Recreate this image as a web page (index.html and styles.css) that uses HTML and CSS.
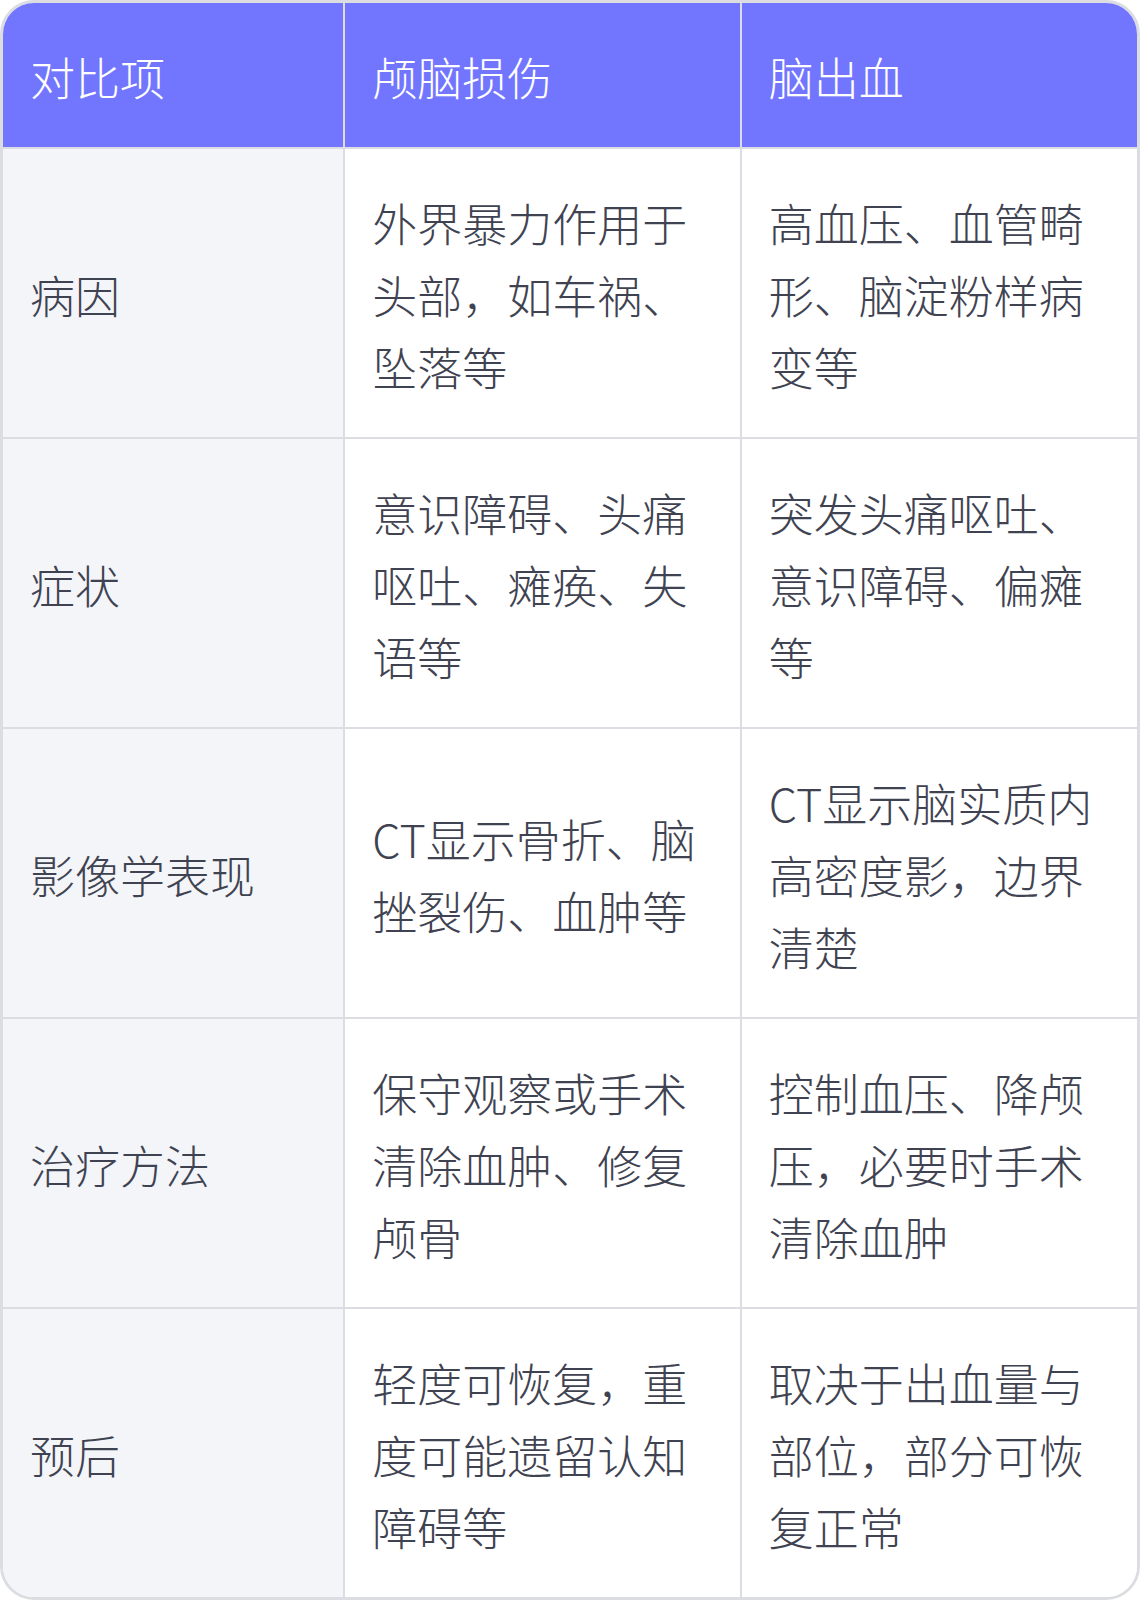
FILE: index.html
```html
<!DOCTYPE html>
<html lang="zh-CN">
<head>
<meta charset="utf-8">
<title>颅脑损伤与脑出血对比</title>
<link rel="stylesheet" href="styles.css">
</head>
<body>
<div class="table-wrap">
  <table class="compare">
    <colgroup>
      <col class="col-label">
      <col class="col-data">
      <col class="col-data">
    </colgroup>
    <thead>
      <tr>
        <th>对比项</th>
        <th>颅脑损伤</th>
        <th>脑出血</th>
      </tr>
    </thead>
    <tbody>
      <tr>
        <td class="label">病因</td>
        <td>外界暴力作用于头部，如车祸、坠落等</td>
        <td>高血压、血管畸形、脑淀粉样病变等</td>
      </tr>
      <tr>
        <td class="label">症状</td>
        <td>意识障碍、头痛呕吐、瘫痪、失语等</td>
        <td>突发头痛呕吐、意识障碍、偏瘫等</td>
      </tr>
      <tr>
        <td class="label">影像学表现</td>
        <td>CT显示骨折、脑挫裂伤、血肿等</td>
        <td>CT显示脑实质内高密度影，边界清楚</td>
      </tr>
      <tr>
        <td class="label">治疗方法</td>
        <td>保守观察或手术清除血肿、修复颅骨</td>
        <td>控制血压、降颅压，必要时手术清除血肿</td>
      </tr>
      <tr>
        <td class="label">预后</td>
        <td>轻度可恢复，重度可能遗留认知障碍等</td>
        <td>取决于出血量与部位，部分可恢复正常</td>
      </tr>
    </tbody>
  </table>
</div>
</body>
</html>
```

FILE: styles.css
```css
html, body {
  margin: 0;
  padding: 0;
  background: #ffffff;
}

body {
  font-family: "Noto Sans CJK SC", "Noto Sans", sans-serif;
  font-weight: 300;
  font-size: 45px;
  line-height: 72px;
  color: #3f4351;
}

.table-wrap {
  width: 1140px;
  height: 1600px;
  box-sizing: border-box;
  border: 3px solid #dcdde2;
  border-radius: 34px;
  overflow: hidden;
}

.compare {
  width: 100%;
  border-collapse: collapse;
  table-layout: fixed;
}

.col-label { width: 30.1%; }
.col-data { width: 34.95%; }

.compare th,
.compare td {
  padding: 38px 27px 34px;
  text-align: left;
  vertical-align: middle;
  border-right: 2px solid #dcdde2;
  border-bottom: 2px solid #dcdde2;
  word-break: break-all;
}

.compare th:last-child,
.compare td:last-child {
  border-right: none;
}

.compare tbody tr:last-child td {
  border-bottom: none;
}

.compare th {
  background: #7276ff;
  color: #ffffff;
  font-weight: 300;
  height: 72px;
}

.compare td {
  height: 216px;
  background: #ffffff;
}

.compare td.label {
  background: #f4f5f9;
}
```
